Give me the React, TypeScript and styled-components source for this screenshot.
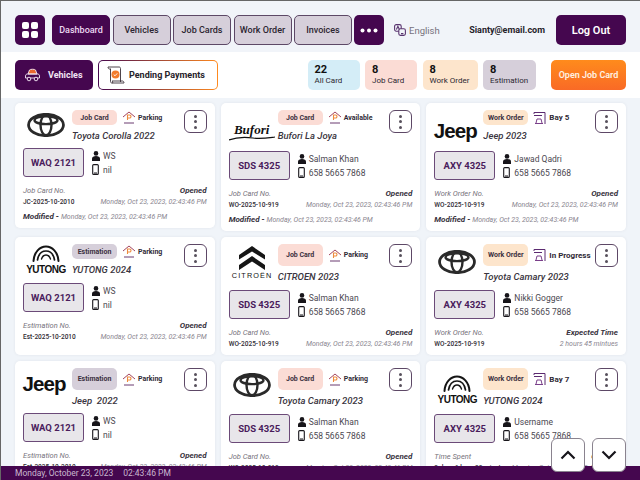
import React from "react";
import styled, { createGlobalStyle } from "styled-components";

const purple = "#45074f";

const GlobalStyle = createGlobalStyle`
  html, body { margin: 0; padding: 0; }
  * { box-sizing: border-box; }
  body { font-family: Roboto, "Noto Sans", sans-serif; }
`;

const Page = styled.div`
  position: relative;
  width: 640px;
  height: 480px;
  display: flex;
  flex-direction: column;
  overflow: hidden;
  background: #f0f4f9;
  border-top: 1px solid #666;
  border-left: 1px solid #666;
`;

const Header = styled.header`
  height: 51px;
  flex: none;
  display: flex;
  align-items: center;
  padding: 7px 14px 0;
  background: #f1f4f9;
`;
const SquareButton = styled.button`
  width: 30px;
  height: 30px;
  border: none;
  border-radius: 5px;
  padding: 0;
  background: ${purple};
  display: flex;
  align-items: center;
  justify-content: center;
`;
const Nav = styled.nav`
  display: flex;
  gap: 2.5px;
  margin: 0 2px 0 7px;
`;
const NavItem = styled.a<{ $active?: boolean }>`
  width: 58px;
  height: 30px;
  border-radius: 5px;
  display: flex;
  align-items: center;
  justify-content: center;
  font-size: 9px;
  font-weight: 500;
  background: ${(p) => (p.$active ? purple : "#d6cfda")};
  border: 1px solid ${(p) => (p.$active ? purple : "#5d4866")};
  color: ${(p) => (p.$active ? "#ecd9f2" : "#2c2530")};
`;
const Lang = styled.div`
  display: flex;
  align-items: center;
  gap: 3px;
  margin-left: 10px;
  font-size: 9.5px;
  color: #77727c;
`;
const Email = styled.div`
  margin-left: auto;
  font-size: 9px;
  font-weight: 700;
  color: #25222a;
`;
const LogOut = styled.button`
  width: 70px;
  height: 30px;
  margin-left: 11px;
  border: none;
  border-radius: 5px;
  background: ${purple};
  color: #fff;
  font: 600 11px Roboto, sans-serif;
`;

const Toolbar = styled.div`
  height: 46px;
  flex: none;
  display: flex;
  align-items: center;
  padding: 0 14px;
  background: #fff;
`;
const VehiclesTab = styled.div`
  width: 78px;
  height: 30px;
  border-radius: 5px;
  background: ${purple};
  color: #f1e4f4;
  font-size: 9px;
  font-weight: 700;
  display: flex;
  align-items: center;
  gap: 7px;
  padding-left: 9px;
`;
const PendingTab = styled.div`
  width: 120px;
  height: 30px;
  margin-left: 5px;
  border-radius: 5px;
  border: 1px solid transparent;
  background: linear-gradient(#fff, #fff) padding-box,
    linear-gradient(90deg, ${purple}, #ff8a1e) border-box;
  color: #26222a;
  font-size: 9px;
  font-weight: 700;
  display: flex;
  align-items: center;
  gap: 4px;
  padding-left: 8px;
`;
const Stats = styled.div`
  margin-left: auto;
  display: flex;
  gap: 5.5px;
`;
const Stat = styled.div<{ $bg: string; $w: number }>`
  width: ${(p) => p.$w}px;
  height: 30px;
  border-radius: 5px;
  background: ${(p) => p.$bg};
  padding: 4px 0 0 7px;
  color: #2b2730;
  font-size: 8px;
  line-height: 11px;
  b {
    display: block;
    font-size: 11px;
    line-height: 11px;
    color: #111;
  }
`;
const OpenJob = styled.button`
  width: 75px;
  height: 30px;
  margin-left: 15px;
  border: none;
  border-radius: 5px;
  background: linear-gradient(180deg, #ff8b1c, #f96a26);
  color: #fff2e3;
  font: 600 9px Roboto, sans-serif;
`;

const Grid = styled.main`
  flex: 1;
  min-height: 0;
  overflow: hidden;
  padding: 5px 14px 0;
  display: grid;
  grid-template-columns: repeat(3, 1fr);
  grid-auto-rows: max-content;
  gap: 6px;
  align-content: start;
`;
const Card = styled.article<{ $short?: boolean }>`
  background: #fff;
  border-radius: 5px;
  padding: 7px 8px 6px;
  box-shadow: 0 0 3px rgba(70, 60, 90, 0.08);
  align-self: ${(p) => (p.$short ? "start" : "stretch")};
`;
const CardHead = styled.div<{ $h: number }>`
  height: ${(p) => p.$h}px;
  display: flex;
`;
const LogoBox = styled.div<{ $top: number }>`
  width: 46px;
  flex: none;
  margin: ${(p) => p.$top}px 3px 0 0;
  display: flex;
  flex-direction: column;
  align-items: center;
`;
const HeadMain = styled.div`
  flex: 1;
  min-width: 0;
`;
const Tags = styled.div`
  display: flex;
  align-items: center;
`;
const Badge = styled.span<{ $tone: string; $tall?: boolean }>`
  width: 45px;
  height: ${(p) => (p.$tall ? 22 : 15)}px;
  border-radius: 5px;
  background: ${(p) => p.$tone};
  font-size: 7px;
  font-weight: 700;
  color: #3b3040;
  display: flex;
  align-items: center;
  justify-content: center;
`;
const PlaceIcon = styled.span`
  display: flex;
  margin: 0 2px 0 5px;
`;
const PlaceLabel = styled.span<{ $big?: boolean }>`
  font-size: ${(p) => (p.$big ? 8 : 7)}px;
  font-weight: 700;
  color: #2f2a36;
  white-space: nowrap;
`;
const Model = styled.div`
  margin-top: 4px;
  font-size: 9.5px;
  line-height: 14px;
  font-style: italic;
  font-weight: 500;
  color: #3a3540;
  white-space: pre;
`;
const Kebab = styled.button`
  width: 23px;
  height: 23px;
  flex: none;
  border: 1px solid #5d4866;
  border-radius: 6px;
  background: #fff;
  padding: 0;
  display: flex;
  flex-direction: column;
  align-items: center;
  justify-content: center;
  gap: 2.5px;
  i {
    width: 3px;
    height: 3px;
    border-radius: 50%;
    background: #57505c;
  }
`;
const Middle = styled.div`
  display: flex;
  align-items: center;
  gap: 8px;
`;
const Plate = styled.div`
  width: 61px;
  height: 29px;
  flex: none;
  border: 1px solid #6b4a78;
  border-radius: 3px;
  background: #e8e6ea;
  color: #4a1c5c;
  font-size: 9.5px;
  font-weight: 700;
  display: flex;
  align-items: center;
  justify-content: center;
`;
const Contact = styled.div`
  display: grid;
  grid-template-columns: 8px auto;
  column-gap: 3px;
  row-gap: 3px;
  align-items: center;
  margin-top: 1px;
  font-size: 8.5px;
  line-height: 10px;
  color: #4c4851;
`;
const Rows = styled.div`
  margin-top: 9px;
`;
const Row = styled.div`
  display: flex;
  justify-content: space-between;
  height: 10.5px;
  line-height: 10.5px;
  white-space: nowrap;
`;
const Muted = styled.span`
  font-size: 7.5px;
  font-style: italic;
  color: #77737c;
`;
const Status = styled.span`
  font-size: 8px;
  font-style: italic;
  font-weight: 700;
  color: #38333e;
`;
const Code = styled.span`
  font-size: 6.5px;
  font-weight: 500;
  color: #2f2b33;
`;
const DateText = styled.span`
  font-size: 7px;
  font-style: italic;
  color: #8a8690;
`;
const Modified = styled.div`
  margin-top: 5px;
  height: 10px;
  line-height: 10px;
  white-space: nowrap;
  font-size: 8px;
  font-weight: 700;
  font-style: italic;
  color: #38333e;
  span {
    font-weight: 400;
    font-size: 7px;
    color: #8a8690;
  }
`;

const StatusBar = styled.footer`
  height: 14px;
  flex: none;
  background: ${purple};
  color: #c9b8cf;
  font-size: 8.5px;
  line-height: 14px;
  padding-left: 14px;
  span {
    margin-left: 10px;
  }
`;
const ScrollButtons = styled.div`
  position: absolute;
  right: 14px;
  bottom: 8px;
  display: flex;
  gap: 7px;
`;
const ScrollButton = styled.button`
  width: 34px;
  height: 34px;
  border: 1px solid #8a838f;
  border-radius: 6px;
  background: #fff;
  padding: 0;
  display: flex;
  align-items: center;
  justify-content: center;
`;

const Wordmark = styled.span<{ $size: number; $mt?: number }>`
  font-family: "Liberation Sans", Arial, sans-serif;
  font-weight: 700;
  font-size: ${(p) => p.$size}px;
  line-height: 1;
  letter-spacing: -0.5px;
  color: #111;
  white-space: nowrap;
  margin-top: ${(p) => p.$mt ?? 0}px;
`;
const JeepMark = styled(Wordmark)`
  letter-spacing: -0.9px;
  line-height: 20px;
  margin-left: -4px;
`;
const BuforiMark = styled.span`
  font-family: "Liberation Serif", serif;
  font-weight: 700;
  font-style: italic;
  font-size: 13px;
  line-height: 13px;
  color: #111;
`;
const CitroenMark = styled(Wordmark)`
  font-weight: 400;
  letter-spacing: 1px;
  transform: scaleX(1.12);
`;

const Toyota = ({ w }: { w: number }) => (
  <svg width={w} height={w * 0.63} viewBox="0 0 38 24" fill="none" stroke="#2a2a2a">
    <ellipse cx="19" cy="12" rx="17.5" ry="10.7" strokeWidth="2.8" />
    <ellipse cx="19" cy="12" rx="5.5" ry="10.3" strokeWidth="2.4" />
    <ellipse cx="19" cy="7.2" rx="11.5" ry="4" strokeWidth="2.4" />
  </svg>
);
const Yutong = () => (
  <>
    <svg width="28" height="17" viewBox="0 0 28 17" fill="none" stroke="#151515" strokeLinecap="round">
      <path d="M1.5 16C2 7 8 1.5 14 1.5S26 7 26.5 16" strokeWidth="2" />
      <path d="M5.5 15C6.5 9 10 6 14 6s7.500 3 8.500 9" strokeWidth="1.7" />
      <path d="M9.500 14c1-3 2.500-4 4.500-4s3.500 1 4.500 4" strokeWidth="1.4" />
    </svg>
    <Wordmark $size={10} $mt={3}>YUTONG</Wordmark>
  </>
);
const Citroen = () => (
  <>
    <svg width="26" height="24" viewBox="0 0 26 24" fill="#161616">
      <path d="M13 0 26 9v4.500L13 5.500 0 13.500V9z" />
      <path d="M13 10 26 19v5L13 15.500 0 24v-5z" />
    </svg>
    <CitroenMark $size={6.5} $mt={3}>CITROËN</CitroenMark>
  </>
);
const Bufori = () => (
  <>
    <BuforiMark>Bufori</BuforiMark>
    <svg width="46" height="5" viewBox="0 0 46 5" fill="none" stroke="#111" strokeWidth="1.2">
      <path d="M0 4C8 1 16 1 24 2s14 0 22-1" />
    </svg>
  </>
);

const ParkingIcon = () => (
  <svg width="14" height="13" viewBox="0 0 14 13" fill="none">
    <path d="M1 6 7 1l6 5" stroke="#a3455f" strokeWidth="1" />
    <path d="M5.500 9V4h2a1.500 1.500 0 0 1 0 3h-2" stroke="#ee8b3d" strokeWidth="1.1" />
    <path d="M2 12h10" stroke="#6b3b70" strokeWidth="1" />
  </svg>
);
const BayIcon = () => (
  <svg width="14" height="14" viewBox="0 0 14 14" fill="none" stroke="#5b2a70" strokeWidth="1">
    <path d="M1 3V1.500h11V13" />
    <path d="M1 4.500h8" />
    <path d="M3 12l1-4h4l1 4M2 12.500h8" stroke="#7a3f8a" />
  </svg>
);
const PersonIcon = () => (
  <svg width="8" height="10" viewBox="0 0 8 10" fill="#17151a">
    <circle cx="4" cy="2.400" r="2.300" />
    <path d="M0 10V7.600C0 6 1.600 5 4 5s4 1 4 2.600V10z" />
  </svg>
);
const PhoneIcon = () => (
  <svg width="7" height="11" viewBox="0 0 7 11" fill="none" stroke="#17151a">
    <rect x="0.700" y="0.600" width="5.600" height="9.800" rx="1" strokeWidth="1.100" />
    <path d="M2 9h3" strokeWidth="1" />
  </svg>
);

type CardData = {
  logo: React.ReactNode;
  logoTop: number;
  head: number;
  badge: "Job Card" | "Work Order" | "Estimation";
  tall?: boolean;
  place: string;
  bay?: boolean;
  model: string;
  plate: string;
  name: string;
  phone: string;
  label: string;
  status: string;
  code: string;
  date?: string;
  modified?: boolean;
  short?: boolean;
};

const tones = { "Job Card": "#fbdcd5", "Work Order": "#fde5cc", Estimation: "#d6cfda" };
const longDate = "Monday, Oct 23, 2023, 02:43:46 PM";
const num = "658 5665 7868";

const cards: CardData[] = [
  { logo: <Toyota w={38} />, logoTop: 3, head: 38, badge: "Job Card", place: "Parking", model: "Toyota Corolla 2022", plate: "WAQ 2121", name: "WS", phone: "nil", label: "Job Card No.", status: "Opened", code: "JC-2025-10-2010", modified: true, short: true },
  { logo: <Bufori />, logoTop: 13, head: 41, badge: "Job Card", place: "Available", model: "Bufori La Joya", plate: "SDS 4325", name: "Salman Khan", phone: num, label: "Job Card No.", status: "Opened", code: "WO-2025-10-919", modified: true },
  { logo: <JeepMark $size={20.5}>Jeep</JeepMark>, logoTop: 11, head: 41, badge: "Work Order", place: "Bay 5", bay: true, model: "Jeep 2023", plate: "AXY 4325", name: "Jawad Qadri", phone: num, label: "Work Order No.", status: "Opened", code: "WO-2025-10-919", modified: true },
  { logo: <Yutong />, logoTop: 1, head: 39, badge: "Estimation", place: "Parking", model: "YUTONG 2024", plate: "WAQ 2121", name: "WS", phone: "nil", label: "Estimation No.", status: "Opened", code: "Est-2025-10-2010" },
  { logo: <Citroen />, logoTop: 2, head: 46, badge: "Job Card", tall: true, place: "Parking", model: "CITROEN 2023", plate: "SDS 4325", name: "Salman Khan", phone: num, label: "Job Card No.", status: "Opened", code: "WO-2025-10-919" },
  { logo: <Toyota w={38} />, logoTop: 6, head: 46, badge: "Work Order", tall: true, place: "In Progress", bay: true, model: "Toyota Camary 2023", plate: "AXY 4325", name: "Nikki Gogger", phone: num, label: "Work Order No.", status: "Expected Time", code: "WO-2025-10-919", date: "2 hours 45 mintues" },
  { logo: <JeepMark $size={20.5}>Jeep</JeepMark>, logoTop: 6, head: 45, badge: "Estimation", tall: true, place: "Parking", model: "Jeep  2022", plate: "WAQ 2121", name: "WS", phone: "nil", label: "Estimation No.", status: "Opened", code: "Est-2025-10-2010" },
  { logo: <Toyota w={38} />, logoTop: 5, head: 46, badge: "Job Card", tall: true, place: "Parking", model: "Toyota Camary 2023", plate: "SDS 4325", name: "Salman Khan", phone: num, label: "Job Card No.", status: "Opened", code: "WO-2025-10-919" },
  { logo: <Yutong />, logoTop: 7, head: 46, badge: "Work Order", tall: true, place: "Bay 7", bay: true, model: "YUTONG 2024", plate: "AXY 4325", name: "Username", phone: num, label: "Time Spent", status: "Opened", code: "2 days 1 hour 33 minutes" },
];

const navItems = ["Vehicles", "Job Cards", "Work Order", "Invoices"];

export default function App() {
  return (
    <>
      <GlobalStyle />
      <Page>
        <Header>
          <SquareButton>
            <svg width="16" height="16" viewBox="0 0 16 16" fill="#fff">
              <rect width="7" height="7" rx="2" />
              <rect x="9" width="7" height="7" rx="2" />
              <rect y="9" width="7" height="7" rx="2" />
              <rect x="9" y="9" width="7" height="7" rx="2" />
            </svg>
          </SquareButton>
          <Nav>
            <NavItem $active>Dashboard</NavItem>
            {navItems.map((n) => (
              <NavItem key={n}>{n}</NavItem>
            ))}
          </Nav>
          <SquareButton>
            <svg width="18" height="5" viewBox="0 0 18 5" fill="#fff">
              <circle cx="2.500" cy="2.500" r="2" />
              <circle cx="9" cy="2.500" r="2" />
              <circle cx="15.500" cy="2.500" r="2" />
            </svg>
          </SquareButton>
          <Lang>
            <svg width="12" height="12" viewBox="0 0 12 12" fill="none" stroke="#5a3570" strokeWidth="1.100">
              <rect x="0.600" y="0.600" width="6.600" height="6.600" rx="1.600" />
              <rect x="4.800" y="4.800" width="6.600" height="6.600" rx="1.600" fill="#f1f4f9" />
              <path d="M2.400 5.400 3.900 2.200l1.500 3.200M7 9.600h2.400" />
            </svg>
            English
          </Lang>
          <Email>Sianty@email.com</Email>
          <LogOut>Log Out</LogOut>
        </Header>
        <Toolbar>
          <VehiclesTab>
            <svg width="17" height="14" viewBox="0 0 17 14" fill="none" stroke="#f4e9f5" strokeWidth="0.900">
              <path d="M4 6 5.500 2C6 1 11 1 11.500 2L13 6z" fill="#e8682e" />
              <path d="M1.500 10V8c0-1.400 1-2 2-2h10c1 0 2 .6 2 2v2h-14z" />
              <circle cx="5" cy="11" r="1.800" fill={purple} />
              <circle cx="12" cy="11" r="1.800" fill={purple} />
            </svg>
            Vehicles
          </VehiclesTab>
          <PendingTab>
            <svg width="18" height="19" viewBox="0 0 18 19" fill="none" stroke="#3b3038" strokeWidth="0.900">
              <path d="M1 1h11c1 0 1.500 .6 1.500 1.500V16" />
              <path d="M1 1c0 1 .6 2 1.500 2H4M5 17h12c0-1-.5-2-1.500-2H5c1 1 1 2 0 2-1 0-1.500-.6-1.500-1.500V3" />
              <circle cx="8.500" cy="8.500" r="4" fill="#f37b2d" stroke="none" />
              <path d="M6.700 8.500l1.300 1.300 2.200-2.400" stroke="#fff" />
            </svg>
            Pending Payments
          </PendingTab>
          <Stats>
            <Stat $bg="#d4edf7" $w={52}><b>22</b>All Card</Stat>
            <Stat $bg="#fbdcd5" $w={52}><b>8</b>Job Card</Stat>
            <Stat $bg="#fde5cc" $w={55}><b>8</b>Work Order</Stat>
            <Stat $bg="#d6cfda" $w={53}><b>8</b>Estimation</Stat>
          </Stats>
          <OpenJob>Open Job Card</OpenJob>
        </Toolbar>
        <Grid>
          {cards.map((c, i) => (
            <Card key={i} $short={c.short}>
              <CardHead $h={c.head}>
                <LogoBox $top={c.logoTop}>{c.logo}</LogoBox>
                <HeadMain>
                  <Tags>
                    <Badge $tone={tones[c.badge]} $tall={c.tall}>{c.badge}</Badge>
                    <PlaceIcon>{c.bay ? <BayIcon /> : <ParkingIcon />}</PlaceIcon>
                    <PlaceLabel $big={c.bay}>{c.place}</PlaceLabel>
                  </Tags>
                  <Model>{c.model}</Model>
                </HeadMain>
                <Kebab><i /><i /><i /></Kebab>
              </CardHead>
              <Middle>
                <Plate>{c.plate}</Plate>
                <Contact>
                  <PersonIcon />
                  <span>{c.name}</span>
                  <PhoneIcon />
                  <span>{c.phone}</span>
                </Contact>
              </Middle>
              <Rows>
                <Row>
                  <Muted>{c.label}</Muted>
                  <Status>{c.status}</Status>
                </Row>
                <Row>
                  <Code>{c.code}</Code>
                  <DateText>{c.date ?? longDate}</DateText>
                </Row>
              </Rows>
              {c.modified && (
                <Modified>
                  Modified - <span>{longDate}</span>
                </Modified>
              )}
            </Card>
          ))}
        </Grid>
        <StatusBar>
          Monday, October 23, 2023<span>02:43:46 PM</span>
        </StatusBar>
        <ScrollButtons>
          <ScrollButton>
            <svg width="16" height="10" viewBox="0 0 16 10" fill="none" stroke="#17151a" strokeWidth="2.200">
              <path d="M1.500 8.500 8 2l6.500 6.500" />
            </svg>
          </ScrollButton>
          <ScrollButton>
            <svg width="16" height="10" viewBox="0 0 16 10" fill="none" stroke="#17151a" strokeWidth="2.200">
              <path d="M1.500 1.500 8 8l6.500-6.500" />
            </svg>
          </ScrollButton>
        </ScrollButtons>
      </Page>
    </>
  );
}
